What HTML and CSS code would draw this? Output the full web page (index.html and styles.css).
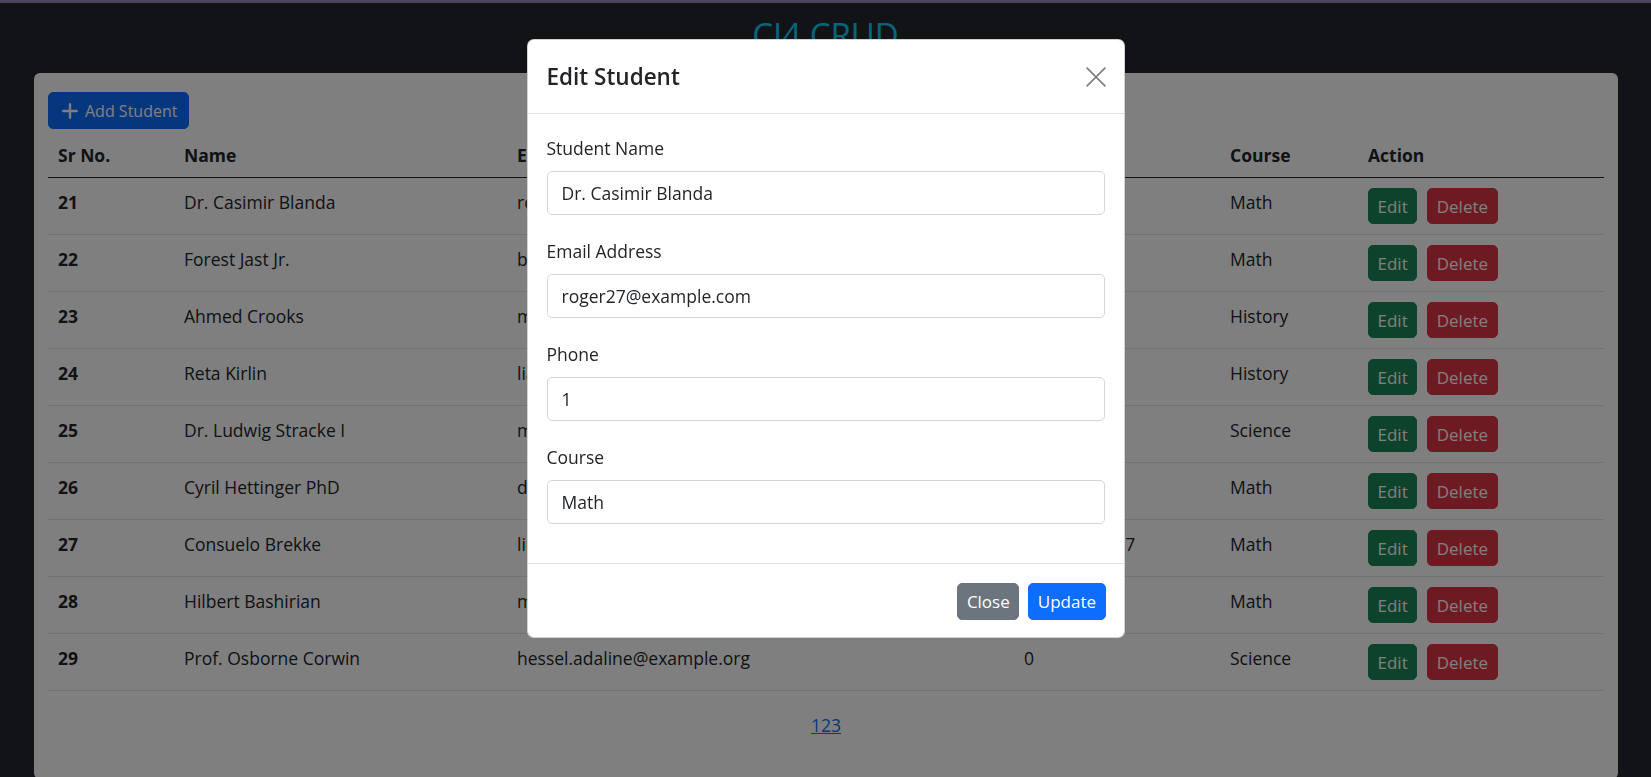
FILE: index.html
```html
<!DOCTYPE html>
<html lang="en">
<head>
<meta charset="utf-8">
<title>CI4 CRUD</title>
<link rel="stylesheet" href="styles.css">
</head>
<body>
<div class="topbar"></div>
<main class="page">
  <h1 class="title">CI4 CRUD</h1>
  <section class="card">
    <button class="btn btn-primary add-btn" type="button">
      <svg class="plus" width="16" height="16" viewBox="0 0 16 16" aria-hidden="true"><path d="M8 1.2v13.6M1.2 8h13.6" stroke="currentColor" stroke-width="2.3" stroke-linecap="round" fill="none"/></svg>
      <span>Add Student</span>
    </button>
    <table class="table">
      <colgroup>
        <col class="c-sr"><col class="c-name"><col class="c-email"><col class="c-phone"><col class="c-course"><col class="c-action">
      </colgroup>
      <thead>
        <tr><th>Sr No.</th><th>Name</th><th>Email</th><th>Phone</th><th>Course</th><th>Action</th></tr>
      </thead>
      <tbody>
        <tr><th>21</th><td>Dr. Casimir Blanda</td><td>roger27@example.com</td><td>1</td><td>Math</td><td class="act"><div class="actions"><button class="btn btn-success">Edit</button><button class="btn btn-danger">Delete</button></div></td></tr>
        <tr><th>22</th><td>Forest Jast Jr.</td><td>bkuhic@example.net</td><td>5</td><td>Math</td><td class="act"><div class="actions"><button class="btn btn-success">Edit</button><button class="btn btn-danger">Delete</button></div></td></tr>
        <tr><th>23</th><td>Ahmed Crooks</td><td>mwaelchi@example.com</td><td>8</td><td>History</td><td class="act"><div class="actions"><button class="btn btn-success">Edit</button><button class="btn btn-danger">Delete</button></div></td></tr>
        <tr><th>24</th><td>Reta Kirlin</td><td>lia.jones@example.org</td><td>3</td><td>History</td><td class="act"><div class="actions"><button class="btn btn-success">Edit</button><button class="btn btn-danger">Delete</button></div></td></tr>
        <tr><th>25</th><td>Dr. Ludwig Stracke I</td><td>marks.ola@example.net</td><td>7</td><td>Science</td><td class="act"><div class="actions"><button class="btn btn-success">Edit</button><button class="btn btn-danger">Delete</button></div></td></tr>
        <tr><th>26</th><td>Cyril Hettinger PhD</td><td>dare.kim@example.com</td><td>2</td><td>Math</td><td class="act"><div class="actions"><button class="btn btn-success">Edit</button><button class="btn btn-danger">Delete</button></div></td></tr>
        <tr><th>27</th><td>Consuelo Brekke</td><td>lind.tracy@example.org</td><td>979-555-0177</td><td>Math</td><td class="act"><div class="actions"><button class="btn btn-success">Edit</button><button class="btn btn-danger">Delete</button></div></td></tr>
        <tr><th>28</th><td>Hilbert Bashirian</td><td>mante.ali@example.net</td><td>4</td><td>Math</td><td class="act"><div class="actions"><button class="btn btn-success">Edit</button><button class="btn btn-danger">Delete</button></div></td></tr>
        <tr><th>29</th><td>Prof. Osborne Corwin</td><td>hessel.adaline@example.org</td><td>0</td><td>Science</td><td class="act"><div class="actions"><button class="btn btn-success">Edit</button><button class="btn btn-danger">Delete</button></div></td></tr>
      </tbody>
    </table>
    <nav class="pager"><a href="#">1</a><a href="#">2</a><a href="#">3</a></nav>
  </section>
</main>

<div class="backdrop"></div>
<div class="modal-wrap">
  <div class="modal" role="dialog" aria-labelledby="editTitle">
    <div class="modal-header">
      <h5 class="modal-title" id="editTitle">Edit Student</h5>
      <button class="btn-close" type="button" aria-label="Close">
        <svg width="20" height="20" viewBox="0 0 20 20" aria-hidden="true"><path d="M0.6 0.6L19.4 19.4M19.4 0.6L0.6 19.4" stroke="#7f7f7f" stroke-width="1.7" fill="none"/></svg>
      </button>
    </div>
    <form class="modal-body">
      <div class="field">
        <label class="label" for="f-name">Student Name</label>
        <input class="input" id="f-name" type="text" value="Dr. Casimir Blanda">
      </div>
      <div class="field">
        <label class="label" for="f-email">Email Address</label>
        <input class="input" id="f-email" type="text" value="roger27@example.com">
      </div>
      <div class="field">
        <label class="label" for="f-phone">Phone</label>
        <input class="input" id="f-phone" type="text" value="1">
      </div>
      <div class="field">
        <label class="label" for="f-course">Course</label>
        <input class="input" id="f-course" type="text" value="Math">
      </div>
    </form>
    <div class="modal-footer">
      <button class="btn btn-secondary" type="button">Close</button>
      <button class="btn btn-primary" type="button">Update</button>
    </div>
  </div>
</div>
</body>
</html>
```

FILE: styles.css
```css
* { box-sizing: border-box; }

html, body {
  margin: 0;
  height: 100%;
  overflow: hidden;
}

body {
  background: #25272c;
  color: #212529;
  font-family: "Open Sans", "Noto Sans", "Liberation Sans", sans-serif;
  font-size: 17.5px;
  line-height: 1.5;
}

.topbar {
  height: 3px;
  background: #948ab4;
}

.page {
  display: flex;
  flex-direction: column;
}

.title {
  margin: 12px 0 18px;
  font-size: 33px;
  line-height: 40px;
  font-weight: 400;
  text-align: center;
  color: #0dcaf0;
}

.card {
  margin: 0 33px 0 34px;
  padding: 19px 14px 41px;
  background: #fff;
  border-radius: 6px;
}

.btn {
  display: inline-flex;
  align-items: center;
  justify-content: center;
  border: 1px solid transparent;
  border-radius: 5px;
  font-family: inherit;
  font-size: 17px;
  line-height: 1;
  color: #fff;
  white-space: nowrap;
  cursor: pointer;
}

.btn-primary { background: #0d6efd; border-color: #0d6efd; }
.btn-secondary { background: #6c757d; border-color: #6c757d; }
.btn-success { background: #198754; border-color: #198754; }
.btn-danger { background: #dc3545; border-color: #dc3545; }

.add-btn {
  display: flex;
  width: fit-content;
  height: 37px;
  gap: 7px;
  padding: 0 11px 0 13px;
  font-size: 16px;
}

.plus { flex: none; }

.table {
  width: 100%;
  border-collapse: collapse;
  table-layout: fixed;
}

.c-sr { width: 126px; }
.c-name { width: 333px; }
.c-email { width: 507px; }
.c-phone { width: 206px; }
.c-course { width: 138px; }
.c-action { width: 246px; }

.table th,
.table td {
  padding: 11px 10px 10px;
  text-align: left;
  vertical-align: top;
  line-height: 27px;
  white-space: nowrap;
}

.table td.act {
  padding: 10px;
}

.table thead th {
  padding: 13px 10px 8px;
  font-weight: 700;
  border-bottom: 1px solid #212529;
}

.table tbody th,
.table tbody td {
  border-bottom: 1px solid #dee2e6;
}

.table tbody th { font-weight: 700; }

.actions {
  display: flex;
  gap: 10px;
}

.actions .btn {
  height: 36px;
  padding: 0 8.5px;
}

.pager {
  margin-top: 22px;
  text-align: center;
  line-height: 25px;
}

.pager a {
  color: #0d6efd;
  text-decoration: underline;
}

/* modal */
.backdrop {
  position: fixed;
  inset: 0;
  background: rgba(0, 0, 0, 0.5);
}

.modal-wrap {
  position: fixed;
  inset: 0;
  display: flex;
  justify-content: center;
  align-items: flex-start;
  padding-top: 39px;
}

.modal {
  width: 598px;
  background: #fff;
  border: 1px solid rgba(0, 0, 0, 0.175);
  border-radius: 7px;
  overflow: hidden;
}

.modal-header {
  display: flex;
  align-items: center;
  justify-content: space-between;
  height: 74px;
  padding: 0 18px 0 19px;
  border-bottom: 1px solid #dee2e6;
}

.modal-title {
  margin: 0;
  font-size: 22.5px;
  font-weight: 600;
  line-height: 1.5;
  color: #212529;
}

.btn-close {
  display: flex;
  padding: 0;
  border: 0;
  background: none;
  cursor: pointer;
}

.modal-body {
  margin: 0;
  padding: 21px 19px 16px;
}

.field { margin-bottom: 23px; }

.label {
  display: block;
  line-height: 27px;
  margin-bottom: 9px;
  color: #212529;
}

.input {
  display: block;
  width: 100%;
  height: 44px;
  padding: 0 14px;
  border: 1px solid #d3d7dc;
  border-radius: 5px;
  font-family: inherit;
  font-size: 17.5px;
  color: #212529;
  background: #fff;
}

.modal-footer {
  display: flex;
  justify-content: flex-end;
  gap: 9px;
  padding: 19px 18px 17px;
  border-top: 1px solid #dee2e6;
}

.modal-footer .btn {
  height: 37px;
  padding: 0 8.5px;
}
```
